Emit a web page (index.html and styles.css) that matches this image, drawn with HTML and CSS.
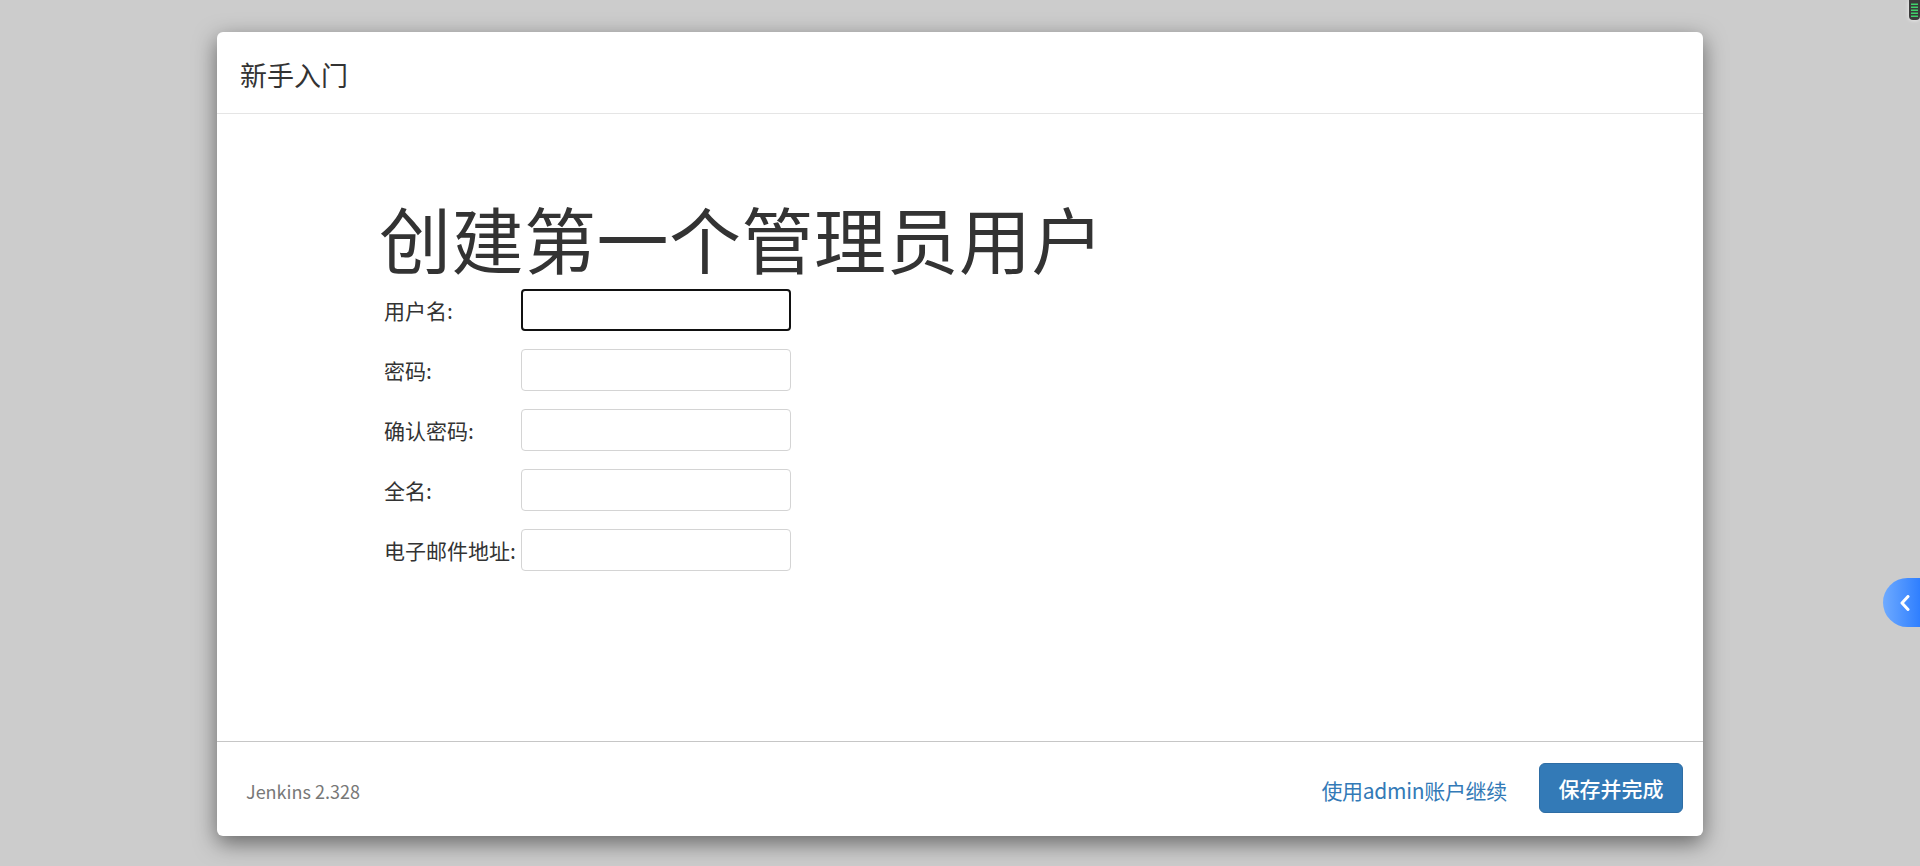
FILE: index.html
```html
<!DOCTYPE html>
<html lang="zh-CN">
<head>
<meta charset="utf-8">
<title>新手入门</title>
<link rel="stylesheet" href="styles.css">
</head>
<body>
<div class="modal">
  <div class="modal-header">
    <h4 class="modal-title">新手入门</h4>
  </div>
  <div class="modal-body">
    <h1 class="page-title">创建第一个管理员用户</h1>
    <form class="user-form">
      <label class="field-label" for="username">用户名:</label>
      <input class="field-input focused" id="username" type="text">
      <label class="field-label" for="password1">密码:</label>
      <input class="field-input" id="password1" type="password">
      <label class="field-label" for="password2">确认密码:</label>
      <input class="field-input" id="password2" type="password">
      <label class="field-label" for="fullname">全名:</label>
      <input class="field-input" id="fullname" type="text">
      <label class="field-label" for="email">电子邮件地址:</label>
      <input class="field-input" id="email" type="text">
    </form>
  </div>
  <div class="modal-footer">
    <div class="version">Jenkins 2.328</div>
    <div class="actions">
      <a class="skip-link" href="#">使用admin账户继续</a>
      <button class="btn-primary" type="button">保存并完成</button>
    </div>
  </div>
</div>

<div class="battery">
  <svg width="11" height="20" viewBox="0 0 11 20">
    <path d="M0 0 H11 V16 Q11 20 7 20 H4 Q0 20 0 16 Z" fill="#3b3b3b"/>
    <rect x="2" y="3.5" width="7" height="1.5" fill="#3fd36b"/>
    <rect x="2" y="6.5" width="7" height="1.5" fill="#3fd36b"/>
    <rect x="2" y="9.5" width="7" height="1.5" fill="#3fd36b"/>
    <rect x="2" y="12.5" width="7" height="1.5" fill="#3fd36b"/>
    <rect x="2" y="15.5" width="7" height="1.5" fill="#3fd36b"/>
  </svg>
</div>

<div class="side-tab">
  <svg width="12" height="16" viewBox="0 0 12 16">
    <path d="M9 1.5 L3 8 L9 14.5" fill="none" stroke="#ffffff" stroke-width="3" stroke-linecap="round" stroke-linejoin="round"/>
  </svg>
</div>
</body>
</html>
```

FILE: styles.css
```css
html, body {
  margin: 0;
  padding: 0;
}

body {
  background: #cccccc;
  height: 866px;
  overflow: hidden;
  font-family: "Noto Sans CJK SC", "Liberation Sans", sans-serif;
  color: #333333;
  padding: 32px 0 0 217px;
  box-sizing: border-box;
}

.modal {
  width: 1486px;
  height: 804px;
  background: #ffffff;
  border-radius: 6px;
  box-shadow: 0 7px 22px rgba(0, 0, 0, 0.5);
  display: flex;
  flex-direction: column;
  overflow: hidden;
}

.modal-header {
  height: 77px;
  border-bottom: 1px solid #e5e5e5;
  display: flex;
  align-items: center;
  padding: 4px 23px 0;
  flex: none;
}

.modal-title {
  margin: 0;
  font-size: 27px;
  font-weight: 400;
  line-height: 38px;
  color: #333333;
}

.modal-body {
  flex: 1;
  padding: 83px 0 0 162px;
}

.page-title {
  margin: 0;
  font-size: 72px;
  font-weight: 400;
  line-height: 80px;
  letter-spacing: 0.5px;
  color: #333333;
}

.user-form {
  margin: 12px 0 0 5px;
  display: grid;
  grid-template-columns: 137px 270px;
  grid-auto-rows: 42px;
  row-gap: 18px;
  align-items: center;
}

.field-label {
  font-size: 21px;
  line-height: 30px;
  color: #333333;
  white-space: nowrap;
}

.field-input {
  box-sizing: border-box;
  width: 270px;
  height: 42px;
  border: 1px solid #d4d4d4;
  border-radius: 4px;
  background: #ffffff;
  margin: 0;
  padding: 0 10px;
  font-family: inherit;
  font-size: 21px;
  outline: none;
}

.field-input.focused {
  border: 2px solid #111111;
  border-radius: 4px;
}

.modal-footer {
  height: 94px;
  border-top: 1px solid #c6c6c6;
  display: flex;
  align-items: center;
  justify-content: space-between;
  padding: 0 20px 0 29px;
  flex: none;
}

.version {
  font-size: 18px;
  color: #777777;
  padding-top: 3px;
  line-height: 28px;
}

.actions {
  display: flex;
  align-items: center;
  gap: 32px;
}

.skip-link {
  font-size: 21px;
  line-height: 30px;
  letter-spacing: -0.3px;
  color: #337ab7;
  text-decoration: none;
  padding-top: 2px;
}

.btn-primary {
  box-sizing: border-box;
  width: 144px;
  height: 50px;
  background: #337ab7;
  border: 1px solid #2e6da4;
  border-radius: 6px;
  color: #ffffff;
  font-family: inherit;
  font-size: 21px;
  font-weight: 500;
  padding: 0;
  margin-top: -2px;
}

.battery {
  position: absolute;
  top: 0;
  right: 0;
  width: 11px;
  height: 20px;
  filter: drop-shadow(0 0 2px rgba(255, 255, 255, 0.8));
}

.battery svg {
  display: block;
}

.side-tab {
  position: absolute;
  right: 0;
  top: 578px;
  width: 37px;
  height: 49px;
  border-radius: 25px 0 0 25px;
  background: linear-gradient(to right, #6eaaff, #2f7fff);
  display: flex;
  align-items: center;
  justify-content: flex-start;
  padding-left: 16px;
  box-sizing: border-box;
}

.side-tab svg {
  display: block;
}
```
